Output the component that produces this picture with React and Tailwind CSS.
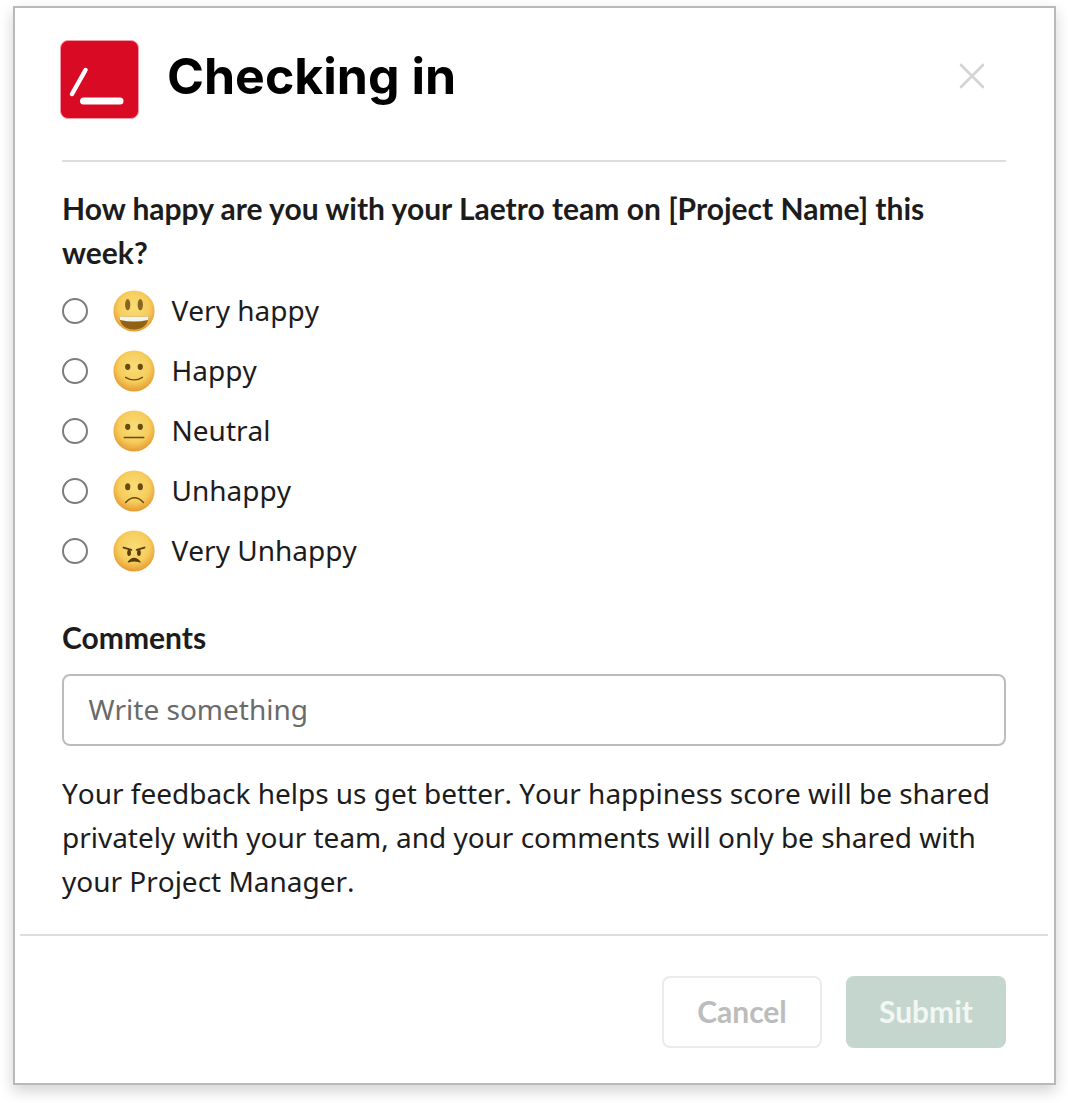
const options = [
  { label: 'Very happy', face: 'veryHappy' },
  { label: 'Happy', face: 'happy' },
  { label: 'Neutral', face: 'neutral' },
  { label: 'Unhappy', face: 'unhappy' },
  { label: 'Very Unhappy', face: 'angry' },
]

function Eyes({ ry = 3, y = 16, color = '#6b4a12' }) {
  return (
    <>
      <ellipse cx="14" cy={y} rx="2.5" ry={ry} fill={color} />
      <ellipse cx="26" cy={y} rx="2.5" ry={ry} fill={color} />
    </>
  )
}

function Emoji({ face }) {
  const id = `grad-${face}`
  return (
    <svg width="42" height="42" viewBox="0 0 40 40" className="shrink-0">
      <defs>
        <radialGradient id={id} cx="50%" cy="40%" r="60%">
          <stop offset="0%" stopColor="#f9dd78" />
          <stop offset="62%" stopColor="#f6cd5c" />
          <stop offset="100%" stopColor="#e59a32" />
        </radialGradient>
      </defs>
      <circle cx="20" cy="20" r="19.6" fill={`url(#${id})`} />
      {face === 'veryHappy' && (
        <>
          <Eyes ry={5.4} y={14} color="#8a6420" />
          <path d="M6 25 Q20 26 34 25 Q33 37.5 20 37.5 Q7 37.5 6 25Z" fill="#8f6216" />
          <path d="M6 25 Q20 26 34 25 Q33.8 27.2 33.2 28.6 Q20 31.5 6.8 28.6 Q6.2 27.2 6 25Z" fill="#f4f4ee" />
        </>
      )}
      {face === 'happy' && (
        <>
          <Eyes />
          <path d="M12 26 Q20 31 28 26" fill="none" stroke="#6b4a12" strokeWidth="1.3" strokeLinecap="round" />
        </>
      )}
      {face === 'neutral' && (
        <>
          <Eyes />
          <rect x="10" y="25.4" width="20" height="1.4" rx="0.7" fill="#6b4a12" />
        </>
      )}
      {face === 'unhappy' && (
        <>
          <Eyes ry={3.4} />
          <path d="M12 31 Q20.5 22 29 31" fill="none" stroke="#6b4a12" strokeWidth="1.4" strokeLinecap="round" />
        </>
      )}
      {face === 'angry' && (
        <>
          <ellipse cx="15.3" cy="21.7" rx="1.8" ry="3" fill="#5a3c0c" />
          <ellipse cx="24.7" cy="21.7" rx="1.8" ry="3" fill="#5a3c0c" />
          <path d="M10 16.7 L17.5 19 M30 16.7 L22.5 19" fill="none" stroke="#5a3c0c" strokeWidth="1.7" strokeLinecap="round" />
          <path d="M14.5 30.5 Q20 23.5 26 30.5 Q20 28.5 14.5 30.5Z" fill="#5a3c0c" stroke="#5a3c0c" strokeWidth="1" strokeLinejoin="round" />
        </>
      )}
    </svg>
  )
}

function Logo() {
  return (
    <div className="w-[79px] h-[79px] rounded-[8px] bg-[#d90a23] border border-[#f29aa6] shrink-0 -ml-[2px]">
      <svg width="77" height="77" viewBox="0 0 77 77">
        <path d="M24.5 29 L11 53" stroke="#fff" strokeWidth="4.5" strokeLinecap="round" />
        <path d="M22.5 60 H59" stroke="#fff" strokeWidth="7" strokeLinecap="round" />
      </svg>
    </div>
  )
}

export default function App() {
  return (
    <div className="h-[1103px] w-[1068px] bg-white pl-[13px] pr-[12px] pt-[6px] font-['Noto_Sans',sans-serif]">
      <div className="h-[1079px] bg-white border-2 border-[#b9b9b9] shadow-[0_6px_14px_rgba(0,0,0,0.18)] flex flex-col">
        <div className="pl-[47px] pr-[48px] flex flex-col">
          <div className="h-[154px] border-b-2 border-[#dedede] flex items-center pb-[10px]">
            <Logo />
            <h1 className="ml-[28px] mb-[6px] text-[50px] leading-none font-bold text-black font-['Inter',sans-serif]">
              Checking in
            </h1>
            <svg width="26" height="26" viewBox="0 0 26 26" className="ml-auto mr-[21px] mb-[6px]">
              <path d="M2 2 L24 24 M24 2 L2 24" stroke="#d4d4d4" strokeWidth="2.6" strokeLinecap="round" />
            </svg>
          </div>

          <h2 className="mt-[24px] text-[30px] leading-[44px] font-bold text-[#1d1c1d] font-['Lato',sans-serif]">
            How happy are you with your Laetro team on [Project Name] this week?
          </h2>

          <div className="flex flex-col mt-[7px]">
            {options.map((o) => (
              <label key={o.label} className="h-[60px] flex items-center">
                <span className="w-[26px] h-[26px] rounded-full border-2 border-[#7c7c7c] bg-white shrink-0" />
                <span className="ml-[25px] flex">
                  <Emoji face={o.face} />
                </span>
                <span className="ml-[16.5px] pb-[2px] text-[28px] text-[#1d1c1d] font-['Noto_Sans',sans-serif] [font-kerning:none]">{o.label}</span>
              </label>
            ))}
          </div>

          <div className="mt-[34px] text-[30px] leading-[44px] font-bold text-[#1d1c1d] font-['Lato',sans-serif]">
            Comments
          </div>

          <div className="mt-[15px] h-[72px] rounded-[8px] border-2 border-[#bcbcbc] flex items-center pl-[24.5px] pb-[2px] text-[28px] text-[#6a6a6a] [font-kerning:none]">
            Write something
          </div>

          <p className="mt-[25px] text-[28px] leading-[44px] tracking-[-0.02px] text-[#1d1c1d] [font-kerning:none]">
            Your feedback helps us get better. Your happiness score will be shared privately with your team, and your comments will only be shared with your Project Manager.
          </p>
        </div>

        <div className="ml-[5px] mr-[6px] mt-[31px] border-t-2 border-[#dedede]" />

        <div className="pl-[47px] pr-[48px] mt-[40px] flex justify-end gap-[24px] font-['Lato',sans-serif] text-[30px] font-bold">
          <button className="w-[160px] h-[72px] pb-[2px] rounded-[8px] border-2 border-[#ebebeb] bg-white text-[#bcbcbc]">Cancel</button>
          <button className="w-[160px] h-[72px] pb-[2px] rounded-[8px] bg-[#c4d6cd] text-[#f2f7f4]">Submit</button>
        </div>
      </div>
    </div>
  )
}
